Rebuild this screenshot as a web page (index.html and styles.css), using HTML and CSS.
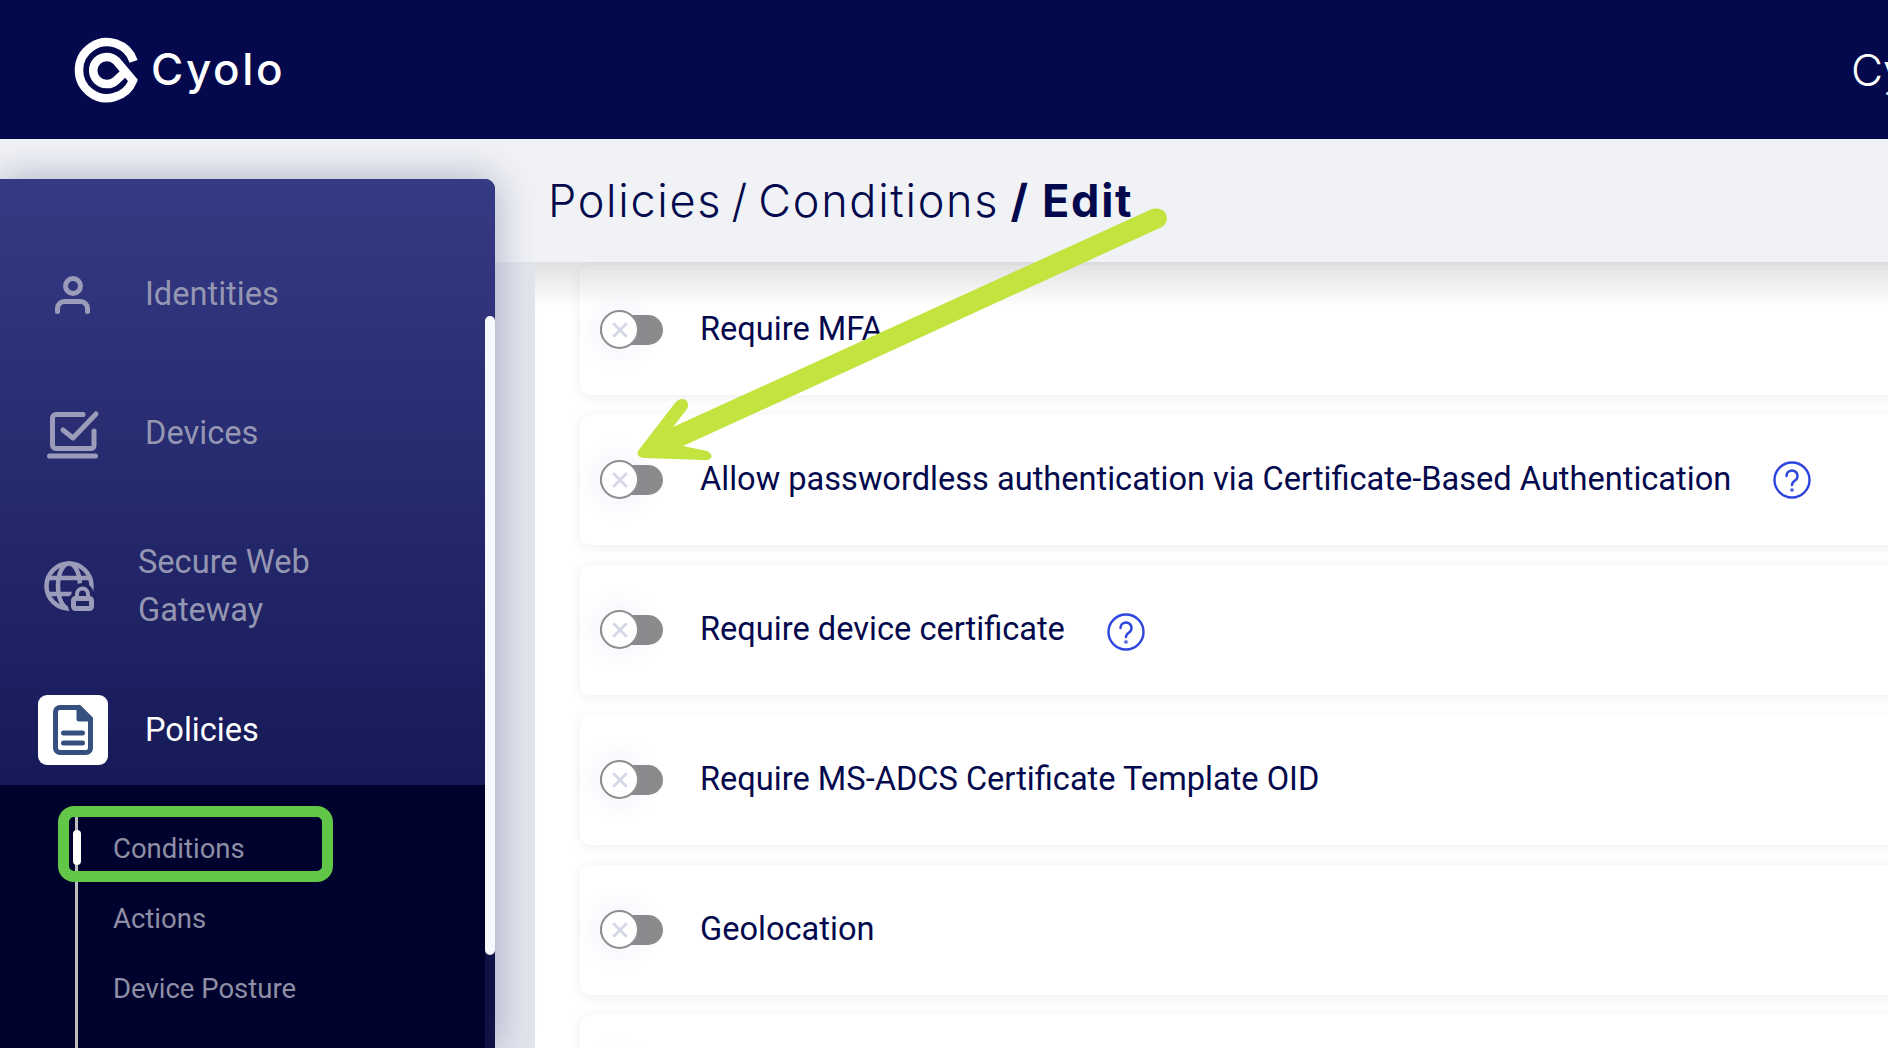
FILE: index.html
```html
<!DOCTYPE html>
<html lang="en">
<head>
  <meta charset="UTF-8" />
  <meta name="viewport" content="width=device-width, initial-scale=1.0"/>
  <title>Cyolo - Policies</title>
  <link rel="stylesheet" href="styles.css">
</head>
<body>
  <header class="topbar">
    <div class="logo">
      <svg class="logo-mark" viewBox="0 0 74 74" fill="none" stroke="#fff" stroke-width="8.500">
        <path d="M63.6 28.400A28 28 0 1 0 63 47.500L46 27.500A13.600 13.600 0 1 0 46 47.500L54 40"/>
      </svg>
      <span class="logo-name">Cyolo</span>
    </div>
    <span class="user-name">Cy</span>
  </header>

  <div class="workspace">
    <div class="side-col">
      <aside class="sidebar">
        <nav class="nav">
          <a class="nav-item">
            <span class="nav-icon">
              <svg width="44" height="44" viewBox="0 0 44 44" fill="none" stroke="#9b9cb9" stroke-width="5" stroke-linecap="round">
                <circle cx="22" cy="14" r="7.500"/>
                <path d="M6.500 39.500v-3a7 7 0 0 1 7-7h16a7 7 0 0 1 7 7v3"/>
              </svg>
            </span>
            <span class="nav-label">Identities</span>
          </a>
          <a class="nav-item">
            <span class="nav-icon">
              <svg width="60" height="60" viewBox="0 0 60 60" fill="none" stroke="#9b9cb9" stroke-width="5" stroke-linecap="round" stroke-linejoin="round">
                <path d="M40 11.500H13a3.500 3.500 0 0 0-3.500 3.500v27a3.500 3.500 0 0 0 3.500 3.500h35a3 3 0 0 0 3-3V28"/>
                <path d="M20 27l10 8L53 11"/>
                <path d="M6.500 53h46"/>
              </svg>
            </span>
            <span class="nav-label">Devices</span>
          </a>
          <a class="nav-item nav-item-tall">
            <span class="nav-icon">
              <svg width="54" height="56" viewBox="0 0 54 56" fill="none" stroke="#9b9cb9" stroke-width="4.500">
                <circle cx="27" cy="29" r="22.500"/>
                <ellipse cx="27" cy="29" rx="11" ry="22.500"/>
                <path d="M6 21h42M6 37h24"/>
                <path d="M35 41v-4a5.500 5.500 0 0 1 11 0v4" stroke="#1f2263" stroke-width="11"/>
                <rect x="31.500" y="41.500" width="18" height="10" rx="2" fill="#1f2263" stroke="#1f2263" stroke-width="11"/>
                <path d="M35 41v-4a5.500 5.500 0 0 1 11 0v4" stroke-width="4"/>
                <rect x="31.500" y="41.500" width="18" height="10" rx="2" fill="#1f2263" stroke-width="5"/>
              </svg>
            </span>
            <span class="nav-label">Secure Web<br>Gateway</span>
          </a>
          <a class="nav-item nav-item-active">
            <span class="nav-icon">
              <svg width="46" height="54" viewBox="0 0 46 54" fill="none" stroke="#35507f" stroke-width="5" stroke-linecap="round" stroke-linejoin="round">
                <path d="M29 4.500H10a4.500 4.500 0 0 0-4.500 4.500v36a4.500 4.500 0 0 0 4.500 4.500h26a4.500 4.500 0 0 0 4.500-4.500V16z"/>
                <path d="M29 4.500V16h11.500z" fill="#35507f"/>
                <path d="M13.500 30h19M13.500 40h19"/>
              </svg>
            </span>
            <span class="nav-label">Policies</span>
          </a>
        </nav>
        <div class="submenu">
          <ul class="sub-list">
            <li class="sub-item sub-item-active">Conditions</li>
            <li class="sub-item">Actions</li>
            <li class="sub-item">Device Posture</li>
          </ul>
          <div class="highlight-box"></div>
        </div>
        <div class="scroll-thumb"></div>
      </aside>
    </div>

    <main class="main">
      <div class="page-title">
        <h1>Policies / Conditions <b>/ Edit</b></h1>
      </div>
      <div class="content">
        <div class="card">
          <span class="toggle"><span class="knob"><svg class="knob-x" viewBox="0 0 16 16"><path d="M2 2l12 12M14 2L2 14"/></svg></span></span>
          <span class="card-label">Require MFA</span>
        </div>
        <div class="card">
          <span class="toggle"><span class="knob"><svg class="knob-x" viewBox="0 0 16 16"><path d="M2 2l12 12M14 2L2 14"/></svg></span></span>
          <span class="card-label">Allow passwordless authentication via Certificate-Based Authentication</span>
          <svg class="help" viewBox="0 0 38 38" fill="none" stroke="#2e46de" stroke-width="2.400" stroke-linecap="round">
            <circle cx="19" cy="19" r="17.500"/>
            <path d="M13.500 15a5.500 5.500 0 1 1 8.500 4.600c-2 1.300-3 2.200-3 4.400"/>
            <circle cx="19" cy="29" r="0.600"/>
          </svg>
        </div>
        <div class="card">
          <span class="toggle"><span class="knob"><svg class="knob-x" viewBox="0 0 16 16"><path d="M2 2l12 12M14 2L2 14"/></svg></span></span>
          <span class="card-label">Require device certificate</span>
          <svg class="help help-low" viewBox="0 0 38 38" fill="none" stroke="#2e46de" stroke-width="2.400" stroke-linecap="round">
            <circle cx="19" cy="19" r="17.500"/>
            <path d="M13.500 15a5.500 5.500 0 1 1 8.500 4.600c-2 1.300-3 2.200-3 4.400"/>
            <circle cx="19" cy="29" r="0.600"/>
          </svg>
        </div>
        <div class="card">
          <span class="toggle"><span class="knob"><svg class="knob-x" viewBox="0 0 16 16"><path d="M2 2l12 12M14 2L2 14"/></svg></span></span>
          <span class="card-label">Require MS-ADCS Certificate Template OID</span>
        </div>
        <div class="card">
          <span class="toggle"><span class="knob"><svg class="knob-x" viewBox="0 0 16 16"><path d="M2 2l12 12M14 2L2 14"/></svg></span></span>
          <span class="card-label">Geolocation</span>
        </div>
        <div class="card">
          <span class="toggle"><span class="knob"><svg class="knob-x" viewBox="0 0 16 16"><path d="M2 2l12 12M14 2L2 14"/></svg></span></span>
        </div>
      </div>
    </main>
  </div>

  <!-- annotation drawn on top of the screenshot -->
  <svg class="arrow" viewBox="0 0 1888 1048">
    <path d="M1152 209Q1162 207 1166 214Q1169 222 1162 227L683 446L707 451Q713 454 711 458Q708 461 703 460L644 458Q636 457 638 451L675 403Q680 397 686 400Q690 404 687 409L673 427Z" fill="#c3e33f"/>
  </svg>
</body>
</html>
```

FILE: styles.css
```css
* {box-sizing: border-box;}
html, body {height: 100%;}
body {margin: 0; display: flex; flex-direction: column; overflow: hidden; font-family: Roboto, sans-serif; color: #03094c; background: #f0f2f6;}

/* Top bar */
.topbar {height: 139px; flex: none; display: flex; align-items: center; background: #03094c; color: #fff; padding-left: 70px; font-family: Inter, sans-serif;}
.logo {display: flex; align-items: center;}
.logo-mark {width: 74px; height: 74px; flex: none;}
.logo-name {margin: -2px 0 0 7px; font-size: 44px; font-weight: 500; letter-spacing: 2.600px;}
.user-name {margin-left: auto; width: 37px; overflow: hidden; font-size: 44px; font-weight: 300;}

.workspace {flex: 1; display: flex; min-height: 0;}

/* Sidebar */
.side-col {width: 535px; flex: none; padding: 40px 40px 0 0; background: linear-gradient(#f0f2f6 123px, #e3e5ee 123px);}
.sidebar {position: relative; height: 100%; display: flex; flex-direction: column; background: #101145; border-top-right-radius: 10px; box-shadow: 0 0 40px rgba(3,9,76,0.3); overflow: hidden;}
.nav {padding-top: 45px; background: linear-gradient(#353a84, #171a58);}
.nav-item {display: flex; align-items: center; height: 139px; padding-left: 38px; font-size: 32.600px; color: #9596b2;}
.nav-icon {width: 70px; height: 70px; flex: none; display: flex; align-items: center; justify-content: center; margin-right: 37px;}
.nav-label {margin-top: 1px;}
.nav-item-tall {height: 166px; line-height: 48px;}
.nav-item-tall .nav-icon {margin-left: -4px; margin-right: 34px;}
.nav-item-active {height: 117px; padding-top: 7px; color: #fff;}
.nav-item-active .nav-label {margin-top: -1px;}
.nav-item-active .nav-icon {background: #fff; border-radius: 9px;}

.submenu {position: relative; flex: 1; margin-right: 10px; padding: 32px 0 0 75px; background: #00022e; display: flex;}
.sub-list {list-style: none; margin: 0; padding: 0; flex: 1; border-left: 3px solid #bbbbbb; display: flex; flex-direction: column; gap: 8px;}
.sub-item {position: relative; height: 62px; line-height: 64px; padding-left: 35px; font-size: 27.500px; color: #8e8fa5;}
.sub-item-active::before {content: ""; position: absolute; left: -5px; top: 13px; width: 8px; height: 35px; border-radius: 4px; background: #fff;}
.highlight-box {position: absolute; left: 58px; top: 21px; width: 275px; height: 76px; border: 11px solid #62c749; border-radius: 16px;}
.scroll-thumb {position: absolute; right: 0; top: 137px; width: 10px; height: 639px; border-radius: 5px; background: #f7f8fd;}

/* Main column */
.main {flex: 1; min-width: 0; display: flex; flex-direction: column;}
.page-title {position: relative; z-index: 2; height: 123px; flex: none; display: flex; align-items: center; padding-left: 13px; background: #f0f2f6; font-family: Inter, sans-serif;}
.page-title::after {content: ""; position: absolute; left: 0; right: 0; top: 100%; height: 45px; background: linear-gradient(rgba(0,0,0,0.12), rgba(0,0,0,0));}
.page-title h1 {margin: 0; font-size: 45px; font-weight: 300; letter-spacing: 1.700px; word-spacing: -5px; white-space: nowrap;}
.page-title b {margin-left: 2px; font-weight: 700; word-spacing: 0;}

.content {flex: 1; min-height: 0; padding: 3px 0 0 45px; background: #fff; display: flex; flex-direction: column; gap: 20px; overflow: hidden;}
.card {height: 130px; flex: none; margin-right: -20px; display: flex; align-items: center; padding-left: 20px; background: #fff; border-radius: 10px; box-shadow: 0 2px 14px rgba(0,0,0,0.07);}
.card-label {font-size: 32.600px; line-height: 40px; margin-top: -2px;}

.toggle {position: relative; width: 63px; height: 30px; flex: none; margin-right: 37px; border-radius: 15px; background: #8c8c8c;}
.knob {position: absolute; left: 0; top: -5px; width: 39px; height: 39px; display: flex; align-items: center; justify-content: center; border: 2px solid #8f8f8f; border-radius: 50%; background: #fff; box-shadow: 0 0 22px 8px rgba(90,100,220,0.06);}
.knob-x {width: 18px; height: 18px; fill: none; stroke: #d5d6e6; stroke-width: 2.500;}

.help {width: 38px; height: 38px; flex: none; margin-left: 42px;}
.help-low {margin-top: 4px;}

.arrow {position: absolute; left: 0; top: 0; width: 1888px; height: 1048px; z-index: 5; pointer-events: none;}
```
